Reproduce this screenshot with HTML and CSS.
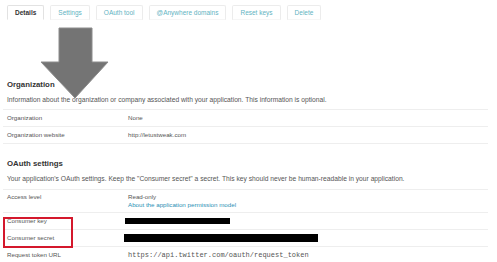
FILE: index.html
```html
<!DOCTYPE html>
<html lang="en">
<head>
    <meta charset="UTF-8">
    <title>Application details</title>
    <link rel="stylesheet" href="styles.css">
</head>
<body>
    <div class="page">
        <ul class="tabs">
            <li class="tab active">Details</li>
            <li class="tab">Settings</li>
            <li class="tab">OAuth tool</li>
            <li class="tab">@Anywhere domains</li>
            <li class="tab">Reset keys</li>
            <li class="tab">Delete</li>
        </ul>

        <div class="section org">
            <h2>Organization</h2>
            <p class="desc">Information about the organization or company associated with your application. This information is optional.</p>
            <div class="rows">
                <div class="row"><span class="label">Organization</span><span class="value">None</span></div>
                <div class="row"><span class="label">Organization website</span><span class="value">http://letustweak.com</span></div>
            </div>
        </div>

        <div class="section oauth">
            <h2>OAuth settings</h2>
            <p class="desc">Your application's OAuth settings. Keep the "Consumer secret" a secret. This key should never be human-readable in your application.</p>
            <div class="rows">
                <div class="row tall">
                    <span class="label">Access level</span>
                    <span class="value">Read-only<br><a href="#">About the application permission model</a></span>
                </div>
                <div class="row"><span class="label">Consumer key</span><span class="value"><span class="redact short"></span></span></div>
                <div class="row"><span class="label">Consumer secret</span><span class="value"><span class="redact long"></span></span></div>
                <div class="row"><span class="label">Request token URL</span><span class="value mono">https://api.twitter.com/oauth/request_token</span></div>
            </div>
        </div>

        <!-- annotations drawn on top of the screenshot -->
        <svg class="arrow" width="69" height="72" viewBox="0 0 69 72">
            <polygon points="19,1 52,1 52,35 68,35 35,71 1,35 19,35" fill="#747474" stroke="#8c8c8c" stroke-width="1"/>
        </svg>
        <div class="highlight"></div>
    </div>
</body>
</html>
```

FILE: styles.css
```css
body {
    font-family: "Liberation Sans", Arial, sans-serif;
    background-color: #fff;
    color: #555;
    margin: 0;
    padding: 0;
}
.page {
    position: relative;
    width: 485px;
    margin-left: 3px;
}
.tabs {
    list-style: none;
    display: flex;
    gap: 6px;
    margin: 5px 0 0 4px;
    padding: 0;
}
.tab {
    height: 13px;
    line-height: 13px;
    padding: 0 7px;
    font-size: 6.5px;
    color: #62b3c2;
    border: 1px solid #ececec;
    border-bottom-color: #f6f6f6;
    border-radius: 2px 2px 0 0;
    background-color: #fff;
}
.tab.active {
    color: #333;
    font-weight: bold;
    border-color: #e2e2e2;
    border-bottom-color: #fff;
}
.section h2 {
    font-size: 7.8px;
    line-height: 12px;
    color: #333;
    margin: 0 0 4px 4px;
}
.org {
    margin-top: 59px;
}
.oauth {
    margin-top: 14px;
}
.desc {
    font-size: 6.7px;
    line-height: 10px;
    margin: 0 0 4px 4px;
}
.oauth .desc {
    margin-bottom: 5px;
}
.rows {
    border-bottom: 1px solid #eee;
}
.row {
    display: flex;
    border-top: 1px solid #eee;
    padding: 4px 0 4px 4px;
    font-size: 6.2px;
    line-height: 8px;
}
.row.tall {
    padding: 3px 0 3px 4px;
}
.label {
    width: 121px;
    flex-shrink: 0;
}
.value a {
    color: #2b8fb4;
    text-decoration: none;
}
.mono {
    font-family: "Liberation Mono", "Courier New", monospace;
    font-size: 7px;
    color: #555;
}
.redact {
    display: inline-block;
    background-color: #000;
    vertical-align: middle;
}
.redact.short {
    width: 105px;
    height: 6px;
    margin-left: -3px;
}
.redact.long {
    width: 194px;
    height: 8px;
    margin-left: -4px;
}
.arrow {
    position: absolute;
    left: 37px;
    top: 22px;
}
.highlight {
    position: absolute;
    left: 0;
    top: 212px;
    width: 66px;
    height: 27px;
    border: 2px solid #d4182c;
}
```
